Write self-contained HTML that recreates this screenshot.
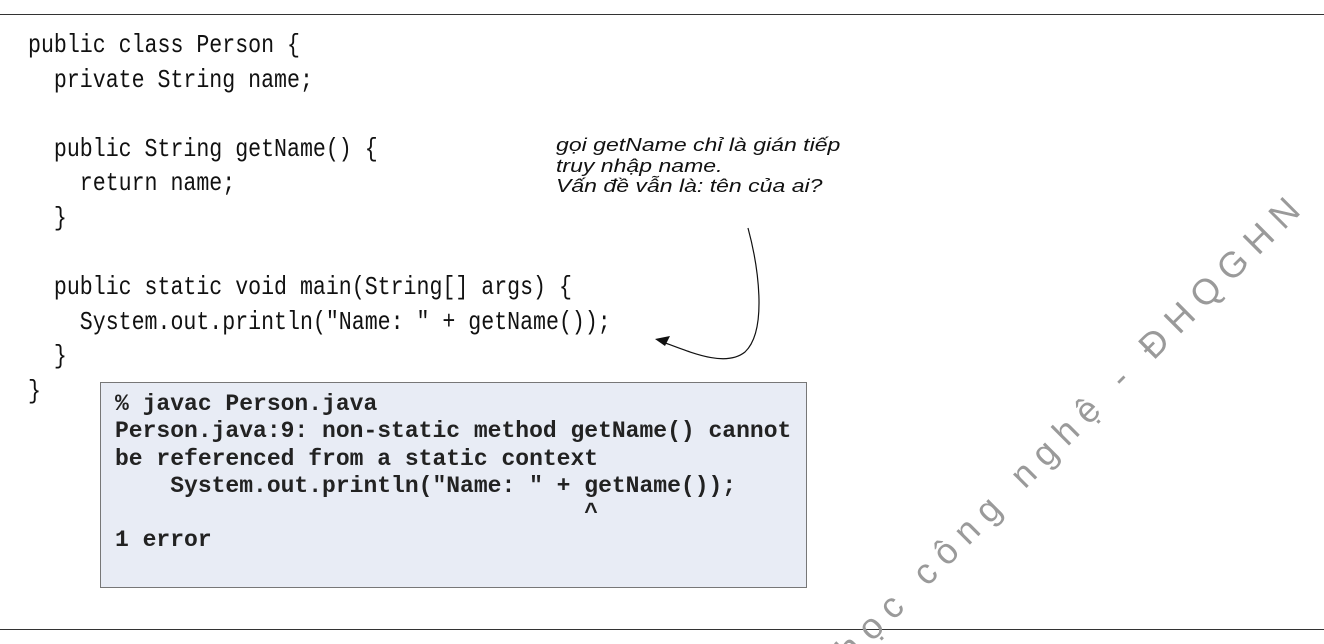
<!DOCTYPE html>
<html><head><meta charset="utf-8"><style>
html,body{margin:0;padding:0;background:#fff;width:1324px;height:644px;overflow:hidden;position:relative}
.hr{position:absolute;left:0;width:1324px;height:1px;background:#333}
pre{margin:0;position:absolute;}
.code{left:28px;top:28px;font:26px/34.6px "Liberation Mono",monospace;color:#111;transform:scaleX(0.83);transform-origin:0 0}
.box{position:absolute;left:100px;top:382px;width:707px;height:206px;background:#e8ecf5;border:1px solid #777;box-sizing:border-box;overflow:hidden}
.box pre{left:14px;top:8px;font:bold 23px/27.3px "Liberation Mono",monospace;color:#222}
.note{position:absolute;left:556px;top:135px;font:italic 18px/20.5px "Liberation Sans",sans-serif;color:#111;transform:scaleX(1.28);transform-origin:0 0;white-space:nowrap}
.wm{position:absolute;left:855px;top:632px;height:36px;font:36px/36px "Liberation Sans",sans-serif;color:#9a9a9a;transform:rotate(-45deg);transform-origin:0 100%;white-space:nowrap;letter-spacing:10px}
</style></head><body>
<div class="hr" style="top:14px"></div>
<div class="hr" style="top:629px"></div>
<div class="wm">học công nghệ - ĐHQGHN</div>
<pre class="code">public class Person {
  private String name;

  public String getName() {
    return name;
  }

  public static void main(String[] args) {
    System.out.println("Name: " + getName());
  }
}</pre>
<div class="note">gọi getName chỉ là gián tiếp<br>truy nhập name.<br>Vấn đề vẫn là: tên của ai?</div>
<svg style="position:absolute;left:0;top:0" width="1324" height="644">
<path d="M748 228 C758 265 768 330 745 352 C725 368 690 352 660 341" fill="none" stroke="#111" stroke-width="1.2"/>
<path d="M655 339 L670 336 L665 346 Z" fill="#111"/>
</svg>
<div class="box"><pre>% javac Person.java
Person.java:9: non-static method getName() cannot
be referenced from a static context
    System.out.println("Name: " + getName());
                                  ^
1 error</pre></div>
</body></html>
